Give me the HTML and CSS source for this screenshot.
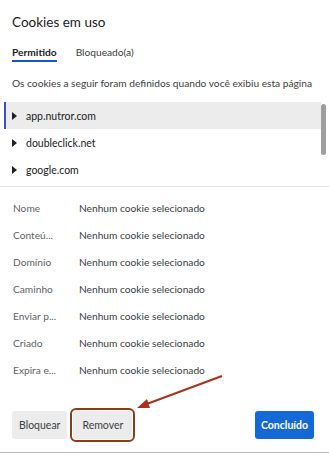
FILE: index.html
```html
<!DOCTYPE html>
<html lang="pt">
<head>
  <meta charset="UTF-8">
  <title>Cookies em uso</title>
  <link rel="stylesheet" href="styles.css">
</head>
<body>

  <div class="dialog">
    <h1>Cookies em uso</h1>

    <div class="tabs">
      <span class="tab active">Permitido</span>
      <span class="tab">Bloqueado(a)</span>
    </div>

    <p class="intro">Os cookies a seguir foram definidos quando você exibiu esta página</p>

    <div class="sites">
      <div class="site selected"><span class="caret"></span>app.nutror.com</div>
      <div class="site"><span class="caret"></span>doubleclick.net</div>
      <div class="site"><span class="caret"></span>google.com</div>
      <div class="scrollbar"></div>
    </div>

    <div class="details">
      <div class="row"><span class="key">Nome</span><span>Nenhum cookie selecionado</span></div>
      <div class="row"><span class="key">Conteú...</span><span>Nenhum cookie selecionado</span></div>
      <div class="row"><span class="key">Domínio</span><span>Nenhum cookie selecionado</span></div>
      <div class="row"><span class="key">Caminho</span><span>Nenhum cookie selecionado</span></div>
      <div class="row"><span class="key">Enviar p...</span><span>Nenhum cookie selecionado</span></div>
      <div class="row"><span class="key">Criado</span><span>Nenhum cookie selecionado</span></div>
      <div class="row"><span class="key">Expira e...</span><span>Nenhum cookie selecionado</span></div>
    </div>

    <div class="buttons">
      <button class="btn">Bloquear</button>
      <button class="btn marked">Remover</button>
      <button class="btn primary">Concluído</button>
    </div>

    <!-- annotation arrow pointing at Remover -->
    <svg class="arrow" width="100" height="40" viewBox="0 0 100 40">
      <line x1="88" y1="1" x2="10" y2="30" stroke="#a8321c" stroke-width="2"/>
      <polygon points="3,33 13,24 16,33" fill="#a8321c"/>
    </svg>
  </div>

</body>
</html>
```

FILE: styles.css
```css
body {
  margin: 0;
  background: #fff;
  font-family: Lato, "Noto Sans", sans-serif;
  font-size: 10.2px;
  color: #3c4043;
}

.dialog {
  position: relative;
  height: 452px;
  border-bottom: 1px solid #bbb;
}

h1 {
  margin: 0;
  padding: 12px 12px 0;
  font-size: 13.5px;
  font-weight: normal;
  color: #202124;
  line-height: 20px;
}

.tabs {
  display: flex;
  gap: 19px;
  padding: 14px 12px 0;
}

.tab {
  padding-bottom: 2px;
  border-bottom: 2px solid transparent;
  color: #3c4043;
}

.tab.active {
  color: #202124;
  font-weight: bold;
  border-bottom-color: #1a56c8;
}

.intro {
  margin: 13px 12px 0;
  line-height: 16px;
  white-space: nowrap;
}

.sites {
  position: relative;
  margin-top: 11px;
  height: 84px;
  border-bottom: 1px solid #e4e4e4;
}

.site {
  display: flex;
  align-items: center;
  height: 27px;
  padding-left: 12px;
  font-size: 10.5px;
  color: #202124;
}

.site.selected {
  background: #ececec;
  box-shadow: inset 4px 0 0 #fff, inset 6px 0 0 #3b4fc4;
  margin-right: 8px;
}

.caret {
  width: 0;
  height: 0;
  border-top: 4px solid transparent;
  border-bottom: 4px solid transparent;
  border-left: 5px solid #202124;
  margin-right: 9px;
}

.scrollbar {
  position: absolute;
  right: 3px;
  top: 2px;
  width: 5px;
  height: 51px;
  border-radius: 3px;
  background: #9e9e9e;
}

.details {
  padding: 7px 13px 0;
}

.row {
  display: flex;
  height: 27px;
  align-items: center;
  color: #3c4043;
}

.key {
  width: 66px;
  color: #5f6368;
}

.buttons {
  display: flex;
  gap: 6px;
  padding: 28px 15px 0 12px;
}

.btn {
  font-family: inherit;
  font-size: 10.5px;
  height: 28px;
  padding: 0 7px;
  border: none;
  border-radius: 3px;
  background: #ececec;
  color: #3c4043;
}

.btn.marked {
  outline: 2px solid #8a3e17;
  outline-offset: 1px;
  padding: 0 9px;
}

.btn.primary {
  margin-left: auto;
  background: #1469d6;
  color: #fff;
  font-weight: bold;
  padding: 0 6px;
}

.arrow {
  position: absolute;
  left: 134px;
  top: 375px;
}
```
